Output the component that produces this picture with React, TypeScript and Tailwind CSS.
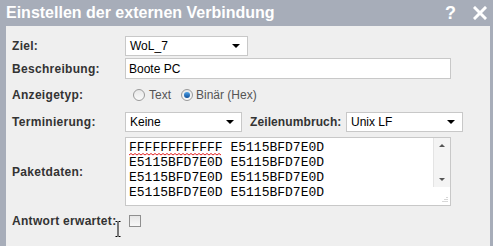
import React from "react";

const font = "font-['Liberation_Sans',Arial,sans-serif]";

function Label({ children, className = "" }: { children: React.ReactNode; className?: string }) {
  return <div className={`w-[113px] shrink-0 text-[12px] font-bold text-[#333] tracking-[0.3px] ${className}`}>{children}</div>;
}

function Select({ value, width }: { value: string; width: string }) {
  return (
    <div className={`${width} h-[20px] bg-white border border-[#c8c8c8] flex items-center justify-between pl-[4px] pr-[7px] text-[12px] text-black`}>
      <span>{value}</span>
      <span className="w-0 h-0 border-l-[4px] border-r-[4px] border-t-[4px] border-l-transparent border-r-transparent border-t-black" />
    </div>
  );
}

function Radio({ checked }: { checked?: boolean }) {
  return (
    <span className="w-[12px] h-[12px] rounded-full border border-[#9a9a9a] bg-gradient-to-b from-[#e8e8e8] to-[#fafafa] flex items-center justify-center">
      {checked && <span className="w-[6px] h-[6px] rounded-full bg-gradient-to-b from-[#4fa3e8] to-[#0f4f99]" />}
    </span>
  );
}

const lines = ["E5115BFD7E0D", "E5115BFD7E0D", "E5115BFD7E0D"];

export default function App() {
  return (
    <div className={`w-[493px] h-[246px] bg-[#a7adb9] flex flex-col ${font}`}>
      <div className="h-[26px] shrink-0 flex items-center justify-between pl-[6px] pr-[6px]">
        <span className="text-white font-bold text-[16px]">Einstellen der externen Verbindung</span>
        <div className="flex items-center gap-[17px] text-white font-bold text-[18px] leading-none">
          <span>?</span>
          <svg width="14" height="14" viewBox="0 0 14 14">
            <path d="M2 2 L12 12 M12 2 L2 12" stroke="white" strokeWidth="3" strokeLinecap="square" />
          </svg>
        </div>
      </div>
      <div className="relative flex-1 ml-[6px] mr-[3px] bg-[#efefef] pl-[6px] pt-[10px] flex flex-col">
        <div className="flex items-center h-[20px]">
          <Label>Ziel:</Label>
          <Select value="WoL_7" width="w-[123px]" />
        </div>
        <div className="flex items-center h-[21px] mt-[2px]">
          <Label>Beschreibung:</Label>
          <div className="w-[326px] h-[21px] bg-white border border-[#c8c8c8] flex items-center pl-[3px] text-[12px] text-black">Boote PC</div>
        </div>
        <div className="flex items-center h-[20px] mt-[6px]">
          <Label>Anzeigetyp:</Label>
          <div className="flex items-center pl-[8px] text-[12px] text-[#555]">
            <Radio />
            <span className="ml-[4px]">Text</span>
            <span className="ml-[10px]"><Radio checked /></span>
            <span className="ml-[3px]">Binär (Hex)</span>
          </div>
        </div>
        <div className="flex items-center h-[20px] mt-[7px]">
          <Label>Terminierung:</Label>
          <Select value="Keine" width="w-[117px]" />
          <span className="ml-[8px] w-[96px] text-[12px] font-bold text-[#333] tracking-[0.1px]">Zeilenumbruch:</span>
          <Select value="Unix LF" width="w-[117px]" />
        </div>
        <div className="flex items-center mt-[5px]">
          <Label>Paketdaten:</Label>
          <div className="relative w-[326px] h-[69px] bg-white border border-[#c8c8c8] pl-[3px] pt-[2px] font-['Liberation_Mono',monospace] text-[13px] leading-[15px] text-black">
            <div>
              <span className="relative inline-block">
                FFFFFFFFFFFF
                <svg className="absolute left-0 bottom-[-1px]" width="94" height="3" viewBox="0 0 94 3">
                  <path d="M0 2 L2 0.5 L4 2 L6 0.5 L8 2 L10 0.5 L12 2 L14 0.5 L16 2 L18 0.5 L20 2 L22 0.5 L24 2 L26 0.5 L28 2 L30 0.5 L32 2 L34 0.5 L36 2 L38 0.5 L40 2 L42 0.5 L44 2 L46 0.5 L48 2 L50 0.5 L52 2 L54 0.5 L56 2 L58 0.5 L60 2 L62 0.5 L64 2 L66 0.5 L68 2 L70 0.5 L72 2 L74 0.5 L76 2 L78 0.5 L80 2 L82 0.5 L84 2 L86 0.5 L88 2 L90 0.5 L92 2" fill="none" stroke="#e02020" strokeWidth="1" />
                </svg>
              </span>{" "}
              E5115BFD7E0D
            </div>
            {lines.map((l, i) => (
              <div key={i}>
                {l} {l}
              </div>
            ))}
            <div className="absolute right-0 top-0 w-[17px] h-[49px] bg-[#f4f4f4] border-l border-[#e4e4e4] flex flex-col items-center justify-between py-[6px]">
              <span className="w-0 h-0 border-l-[3px] border-r-[3px] border-b-[3px] border-l-transparent border-r-transparent border-b-[#555]" />
              <span className="w-0 h-0 border-l-[3px] border-r-[3px] border-t-[3px] border-l-transparent border-r-transparent border-t-[#555]" />
            </div>
            <svg className="absolute right-[2px] bottom-[2px]" width="7" height="7" viewBox="0 0 7 7">
              <path d="M6 1v1M4 3v1M6 3v1M2 5v1M4 5v1M6 5v1" stroke="#b0b0b0" strokeWidth="1" />
            </svg>
          </div>
        </div>
        <div className="flex items-center h-[20px] mt-[5px]">
          <Label>Antwort erwartet:</Label>
          <span className="ml-[4px] w-[12px] h-[12px] border border-[#8f8f8f] bg-gradient-to-b from-[#e6e6e6] to-[#f8f8f8]" />
        </div>
        <svg className="absolute left-[109px] top-[195px]" width="6" height="16" viewBox="0 0 6 16">
          <path d="M0.5 0.5h2M3.5 0.5h2M3 1v14M0.5 15.5h2M3.5 15.5h2" stroke="black" strokeWidth="1" />
        </svg>
      </div>
    </div>
  );
}
